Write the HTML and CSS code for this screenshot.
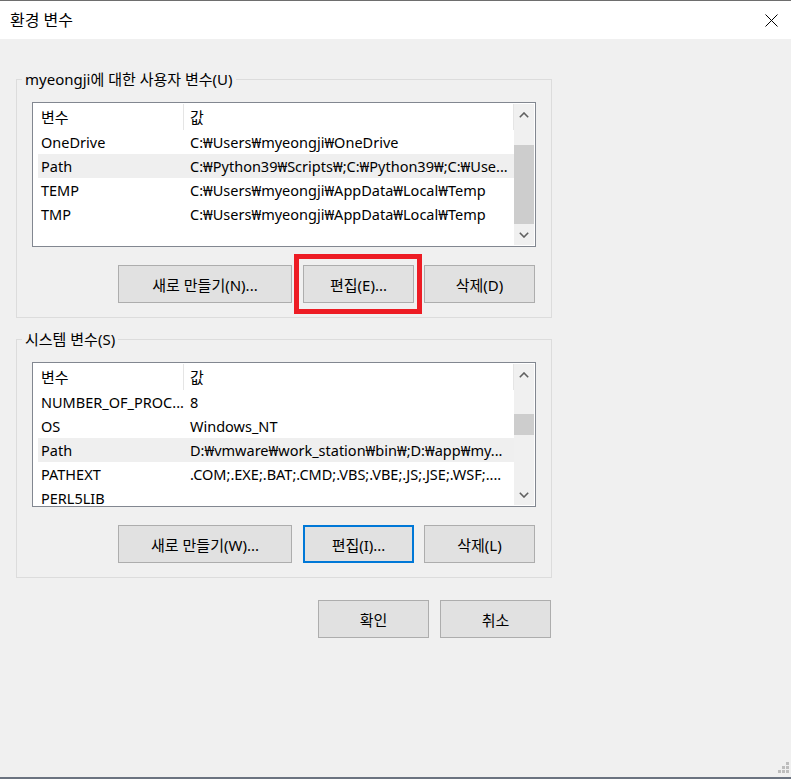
FILE: index.html
```html
<!DOCTYPE html>
<html lang="ko">
<head>
<meta charset="utf-8">
<title>환경 변수</title>
<link rel="stylesheet" href="styles.css">
</head>
<body>
<div class="window">
  <div class="titlebar">
    <span class="title">환경 변수</span>
    <div class="close">
      <svg width="13" height="13" viewBox="0 0 13 13"><path d="M0.5 0.5 L12.5 12.5 M12.5 0.5 L0.5 12.5" stroke="#000" stroke-width="1" fill="none"/></svg>
    </div>
  </div>
  <div class="content">
    <fieldset class="group">
      <legend>myeongji에 대한 사용자 변수(U)</legend>
      <div class="list">
        <div class="list-body">
          <div class="row head"><div class="c1">변수</div><div class="c2">값</div></div>
          <div class="row"><div class="c1">OneDrive</div><div class="c2">C:₩Users₩myeongji₩OneDrive</div></div>
          <div class="row sel"><div class="c1">Path</div><div class="c2">C:₩Python39₩Scripts₩;C:₩Python39₩;C:₩Use...</div></div>
          <div class="row"><div class="c1">TEMP</div><div class="c2">C:₩Users₩myeongji₩AppData₩Local₩Temp</div></div>
          <div class="row"><div class="c1">TMP</div><div class="c2">C:₩Users₩myeongji₩AppData₩Local₩Temp</div></div>
        </div>
        <div class="scrollbar">
          <div class="arrow"><svg width="10" height="6" viewBox="0 0 10 6"><polyline points="0.8,5.2 5,1 9.2,5.2" fill="none" stroke="#606060" stroke-width="1.6"/></svg></div>
          <div class="track"><div class="thumb" style="margin-top:20px;height:79px"></div></div>
          <div class="arrow"><svg width="10" height="6" viewBox="0 0 10 6"><polyline points="0.8,0.8 5,5 9.2,0.8" fill="none" stroke="#606060" stroke-width="1.6"/></svg></div>
        </div>
      </div>
      <div class="buttons">
        <button class="btn wide">새로 만들기(N)...</button>
        <div class="marked"><button class="btn">편집(E)...</button></div>
        <button class="btn">삭제(D)</button>
      </div>
    </fieldset>

    <fieldset class="group second">
      <legend>시스템 변수(S)</legend>
      <div class="list">
        <div class="list-body">
          <div class="row head"><div class="c1">변수</div><div class="c2">값</div></div>
          <div class="row"><div class="c1">NUMBER_OF_PROC...</div><div class="c2">8</div></div>
          <div class="row"><div class="c1">OS</div><div class="c2">Windows_NT</div></div>
          <div class="row sel"><div class="c1">Path</div><div class="c2">D:₩vmware₩work_station₩bin₩;D:₩app₩my...</div></div>
          <div class="row"><div class="c1">PATHEXT</div><div class="c2">.COM;.EXE;.BAT;.CMD;.VBS;.VBE;.JS;.JSE;.WSF;....</div></div>
          <div class="row"><div class="c1">PERL5LIB</div><div class="c2"></div></div>
        </div>
        <div class="scrollbar">
          <div class="arrow"><svg width="10" height="6" viewBox="0 0 10 6"><polyline points="0.8,5.2 5,1 9.2,5.2" fill="none" stroke="#606060" stroke-width="1.6"/></svg></div>
          <div class="track"><div class="thumb" style="margin-top:29px;height:21px"></div></div>
          <div class="arrow"><svg width="10" height="6" viewBox="0 0 10 6"><polyline points="0.8,0.8 5,5 9.2,0.8" fill="none" stroke="#606060" stroke-width="1.6"/></svg></div>
        </div>
      </div>
      <div class="buttons">
        <button class="btn wide">새로 만들기(W)...</button>
        <button class="btn focused">편집(I)...</button>
        <button class="btn">삭제(L)</button>
      </div>
    </fieldset>

    <div class="dialog-buttons">
      <button class="btn">확인</button>
      <button class="btn">취소</button>
    </div>
  </div>
  <div class="grip">
    <svg width="11" height="11" viewBox="0 0 11 11" fill="#bdbdbd">
      <rect x="8" y="0" width="3" height="3"/>
      <rect x="4" y="4" width="3" height="3"/><rect x="8" y="4" width="3" height="3"/>
      <rect x="0" y="8" width="3" height="3"/><rect x="4" y="8" width="3" height="3"/><rect x="8" y="8" width="3" height="3"/>
    </svg>
  </div>
</div>
</body>
</html>
```

FILE: styles.css
```css
* { box-sizing: border-box; }

body {
  margin: 0;
  background: #f0f0f0;
  font-family: "Noto Sans", "Noto Sans CJK KR", sans-serif;
  font-size: 15px;
  color: #000;
}

.window {
  position: relative;
  width: 791px;
  height: 779px;
  overflow: hidden;
  display: flex;
  flex-direction: column;
  background: #f0f0f0;
  border-bottom: 2px solid #6b7380;
}

.titlebar {
  height: 39px;
  flex: none;
  background: #fff;
  border-top: 1px solid #6e6e6e;
  display: flex;
  align-items: center;
  justify-content: space-between;
  padding-left: 10px;
}

.title {
  font-size: 16px;
  line-height: 20px;
}

.close {
  width: 40px;
  height: 38px;
  display: flex;
  align-items: center;
  justify-content: center;
}

.content {
  flex: 1;
  padding: 31px 0 0 16px;
}

.group {
  width: 536px;
  margin: 0;
  padding: 0 15px 14px 15px;
  border: 1px solid #dcdcdc;
  min-width: 0;
}

.group.second {
  margin-top: 12px;
}

.group legend {
  margin-left: -10px;
  padding: 0 3px;
  line-height: 18px;
  font-size: 15px;
}

.list {
  margin-top: 14px;
  height: 145px;
  border: 1px solid #828790;
  background: #fff;
  padding: 1px;
  display: flex;
  font-size: 14.5px;
}

.list-body {
  flex: 1;
  overflow: hidden;
  padding-left: 4px;
}

.row {
  display: flex;
  height: 24px;
  line-height: 24px;
  white-space: nowrap;
}

.row.head {
  height: 26px;
  line-height: 26px;
  font-size: 15px;
}

.row.sel {
  background: #efefef;
}

.c1 {
  width: 146px;
  flex: none;
  padding-left: 3px;
  overflow: hidden;
}

.c2 {
  flex: 1;
  padding-left: 6px;
  overflow: hidden;
}

.row.head .c1,
.row.head .c2 {
  border-right: 1px solid #e5e5e5;
}

.scrollbar {
  width: 20px;
  flex: none;
  background: #f0f0f0;
  display: flex;
  flex-direction: column;
}

.arrow {
  height: 21px;
  flex: none;
  display: flex;
  align-items: center;
  justify-content: center;
}

.track {
  flex: 1;
}

.thumb {
  background: #cdcdcd;
}

.buttons {
  margin-top: 18px;
  display: flex;
  justify-content: flex-end;
  gap: 10px;
  padding-right: 1px;
}

.btn {
  width: 111px;
  height: 38px;
  background: #e1e1e1;
  border: 1px solid #adadad;
  font: inherit;
  color: #000;
  padding: 0;
  margin: 0;
}

.btn.wide {
  width: 174px;
  margin-right: 1px;
}

.btn.focused {
  border: 2px solid #0078d7;
}

.marked {
  position: relative;
  display: flex;
}

.marked::after {
  content: "";
  position: absolute;
  left: -9px;
  right: -8px;
  top: -11px;
  bottom: -11px;
  border: 5px solid #ed1c24;
}

.dialog-buttons {
  width: 536px;
  margin-top: 22px;
  display: flex;
  justify-content: flex-end;
  gap: 11px;
  padding-right: 1px;
}

.grip {
  position: absolute;
  right: 2px;
  bottom: 4px;
  width: 11px;
  height: 11px;
  display: flex;
}
```
